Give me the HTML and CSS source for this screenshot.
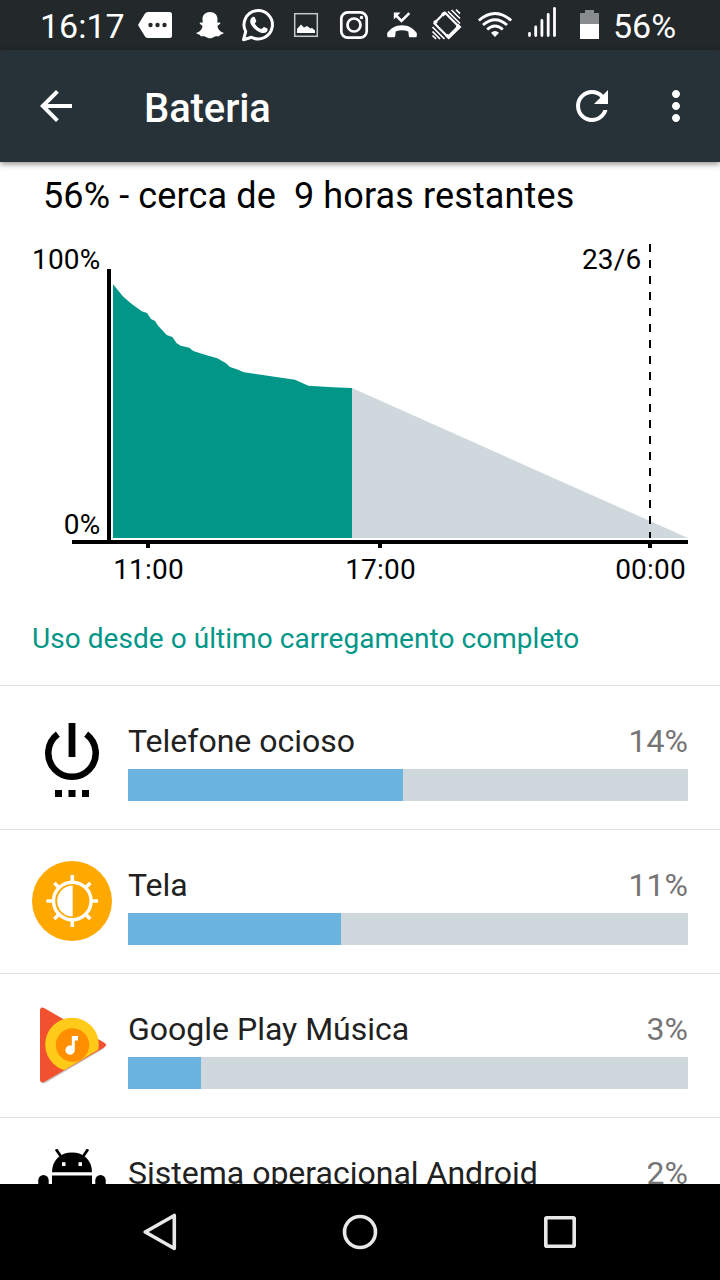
FILE: index.html
```html
<!DOCTYPE html>
<html lang="pt-BR">
<head>
    <meta charset="UTF-8">
    <title>Bateria</title>
    <link rel="stylesheet" href="styles.css">
</head>
<body>
    <div class="status-bar">
        <span class="clock">16:17</span>
        <!-- message -->
        <svg width="55" height="50" viewBox="0 0 55 50">
            <path fill="#fff" d="M7 25L14 13.500Q15 12 17 12H38.500Q41 12 41 14.500V35.500Q41 38 38.500 38H17Q15 38 14 36.500Z"/>
            <circle cx="19.500" cy="25" r="2.200" fill="#23282b"/>
            <circle cx="26.500" cy="25" r="2.200" fill="#23282b"/>
            <circle cx="33.500" cy="25" r="2.200" fill="#23282b"/>
        </svg>
        <!-- snapchat -->
        <svg width="48" height="50" viewBox="0 0 48 50">
            <path fill="#fff" d="M24 12C28.500 12 31.500 15 31.500 19L31.300 22.500C32.500 23 34 22 34.300 23C34.500 24.300 31.500 25 31.500 26.500C32 29.500 34.500 32 37.500 32.800C38 34 35 34.500 34 34.900C33.500 35.500 33.700 36 33 36.300C31.500 36.300 30 36 28.500 36.800C27 37.700 26 38.300 24 38.300C22 38.300 21 37.700 19.500 36.800C18 36 16.500 36.300 15 36.300C14.300 36 14.500 35.500 14 34.900C13 34.500 10 34 10.500 32.800C13.500 32 16 29.500 16.500 26.500C16.500 25 13.500 24.300 13.700 23C14 22 15.500 23 16.700 22.500L16.500 19C16.500 15 19.500 12 24 12Z"/>
        </svg>
        <!-- whatsapp -->
        <svg width="48" height="50" viewBox="0 0 48 50">
            <path fill="none" stroke="#fff" stroke-width="3" stroke-linejoin="round" d="M9.500 39.800L11.700 31.500A14.200 14.200 0 1 1 17.500 37.300Z"/>
            <path fill="#fff" d="M18.300 17.300C19.400 16.600 20.600 16.700 21.100 18L22.300 20.900C22.500 22 20.800 23 20.900 23.700C22.300 26.300 24.400 28 27.300 29.100C28.200 29.100 29.300 26.900 30.200 27L33.300 28.500C34 29 33.500 31.200 32.500 32C30.700 33.500 28.500 33.300 25.700 32.200C21.700 30.500 18.700 27.500 16.800 24C15.500 21.400 16.400 18.600 18.300 17.300Z"/>
        </svg>
        <!-- picture -->
        <svg width="48" height="50" viewBox="0 0 48 50">
            <rect x="12.700" y="13.700" width="22.600" height="22.600" fill="none" stroke="#c4c9cb" stroke-width="1.500"/>
            <path fill="#fff" d="M15 33V29L19 24.500L22 27.500L25 26L28.500 28.500L30 28L33 30.500V33Z"/>
        </svg>
        <!-- instagram -->
        <svg width="48" height="50" viewBox="0 0 48 50">
            <rect x="11.300" y="12.300" width="25.400" height="25.400" rx="6.500" fill="none" stroke="#fff" stroke-width="2.700"/>
            <circle cx="24" cy="25" r="6.500" fill="none" stroke="#fff" stroke-width="2.700"/>
            <circle cx="31.500" cy="17.500" r="1.700" fill="#fff"/>
        </svg>
        <!-- missed call -->
        <svg width="48" height="50" viewBox="0 0 48 50">
            <path fill="none" stroke="#fff" stroke-width="2.600" d="M31.300 13.200L23.500 21L17.500 15"/>
            <path fill="#fff" d="M15.800 12.500H22.500L15.800 19.500Z"/>
            <path fill="#fff" d="M9.200 33C13 28 18 25.300 24 25.300S35 28 38.800 33V36Q38.700 37.200 37.500 37.200H32Q30.900 37.200 30.800 36L30.300 31.500Q24 28.800 17.700 31.500L17.200 36Q17.100 37.200 16 37.200H10.500Q9.300 37.200 9.200 36Z"/>
        </svg>
        <!-- rotation -->
        <svg width="48" height="50" viewBox="0 0 48 50" fill="none" stroke="#fff">
            <path stroke-width="2.200" stroke-linejoin="round" d="M18.800 12.500L32.500 26.200L22 37L8.300 23.300Z"/>
            <path stroke-width="3.500" d="M31 25L33 27L22.700 37L20.500 35M18.500 13L16.300 15.200M10.500 21L8.500 23"/>
            <path stroke-width="1.700" d="M22 11.500L34 23.500M25.500 10L34 18.500M30 9.700L34 13.700M6.500 27L18.500 39M6.500 31.500L14 39M6.500 35.500L10 39"/>
        </svg>
        <!-- wifi -->
        <svg width="48" height="50" viewBox="0 0 48 50">
            <path fill="none" stroke="#fff" stroke-width="2.900" d="M4.800 20.500Q21 6.500 37.200 20.500M9 25Q21 14.500 33 25M13.200 29.500Q21 22.500 28.800 29.500"/>
            <path fill="#fff" d="M17 32.800Q21 29 25 32.800L21 37Z"/>
        </svg>
        <!-- signal -->
        <svg width="48" height="50" viewBox="0 0 48 50">
            <path stroke="#fff" stroke-width="2.800" stroke-linecap="round" d="M7.500 33.500V35.500M13.700 27V35.500M19.900 20.500V35.500M26.200 14.500V35.500M32.500 8.500V35.500"/>
        </svg>
        <!-- battery -->
        <svg width="43" height="50" viewBox="0 0 43 50">
            <path fill="#888c8e" d="M10 13H15V10H24V13H29V24H10Z"/>
            <path fill="#fff" d="M10 24H29V39H10Z"/>
        </svg>
        <span>56%</span>
    </div>

    <div class="toolbar">
        <svg width="48" height="48" viewBox="0 0 24 24"><path fill="#fff" d="M20 11H7.830l5.590-5.590L12 4l-8 8 8 8 1.410-1.410L7.830 13H20v-2z"/></svg>
        <h1>Bateria</h1>
        <svg width="48" height="48" viewBox="0 0 24 24"><path fill="#fff" d="M17.650 6.350C16.200 4.900 14.210 4 12 4c-4.420 0-7.990 3.580-7.990 8s3.570 8 7.990 8c3.730 0 6.840-2.550 7.730-6h-2.080c-.82 2.330-3.040 4-5.650 4-3.310 0-6-2.690-6-6s2.690-6 6-6c1.660 0 3.140.69 4.220 1.780L13 11h7V4l-2.350 2.350z"/></svg>
        <svg class="more" width="48" height="48" viewBox="0 0 24 24"><path fill="#fff" d="M12 8c1.100 0 2-.9 2-2s-.9-2-2-2-2 .9-2 2 .9 2 2 2zm0 2c-1.100 0-2 .9-2 2s.9 2 2 2 2-.9 2-2-.9-2-2-2zm0 6c-1.100 0-2 .9-2 2s.9 2 2 2 2-.9 2-2-.9-2-2-2z"/></svg>
    </div>

    <div class="content">
        <p class="summary">56% - cerca de  9 horas restantes</p>

        <svg class="chart" width="720" height="370" viewBox="0 230 720 370">
            <path fill="#cfd8dc" d="M352 388L688 538H352Z"/>
            <path fill="#009688" d="M113 538V284.300L123.300 296.700L131.700 304L141.700 311.300L147 313L151 319L155 321L158.300 326L166.700 335L172.300 337L176.700 343.300L180.700 345.700L189.300 347.700L193.300 351L203.300 354.300L217.300 358.300L226 363.300L230 367L236.700 369.300L244 372.300L295 379.700L308.300 385.700L333 387.300L352 388V538Z"/>
            <path fill="#000" d="M107 269H111V540H688V544H72V540H107ZM146 544H150V548H146ZM378 544H382V548H378ZM648 544H652V548H648Z"/>
            <path stroke="#000" stroke-width="2" stroke-dasharray="8 8" d="M650 244V538"/>
            <text x="100.500" y="269" text-anchor="end">100%</text>
            <text x="100.500" y="534" text-anchor="end">0%</text>
            <text x="641.500" y="269" text-anchor="end">23/6</text>
            <text x="148.500" y="579" text-anchor="middle">11:00</text>
            <text x="380.500" y="579" text-anchor="middle">17:00</text>
            <text x="650.500" y="579" text-anchor="middle">00:00</text>
        </svg>

        <h2>Uso desde o último carregamento completo</h2>

        <div class="row">
            <svg width="80" height="80" viewBox="0 0 80 80">
                <path fill="none" stroke="#000" stroke-width="6.500" d="M25.800 17.200A23.700 23.700 0 1 0 54.200 17.200"/>
                <path fill="#000" d="M36.600 6H43.400V40H36.600ZM23 73H30V80H23ZM36.500 73H43.500V80H36.500ZM50 73H57V80H50Z"/>
            </svg>
            <div class="info">
                <div class="label"><span>Telefone ocioso</span><span class="percent">14%</span></div>
                <div class="bar"><div class="fill" style="width:275px"></div></div>
            </div>
        </div>

        <div class="row">
            <svg width="80" height="80" viewBox="0 0 80 80">
                <circle cx="40" cy="40" r="40" fill="#ffa800"/>
                <circle cx="40.300" cy="40" r="18.800" fill="none" stroke="#fff" stroke-width="3.400"/>
                <path fill="#fff" d="M40.700 24.500V55.500A15.500 15.500 0 0 1 40.700 24.500Z"/>
                <path stroke="#fff" stroke-width="3.600" d="M40.300 14V20M40.300 60V66M14.500 40H21M59 40H66M22.300 22L27 26.700M58.300 22L53.600 26.700M22.300 58L27 53.300M58.300 58L53.600 53.300"/>
            </svg>
            <div class="info">
                <div class="label"><span>Tela</span><span class="percent">11%</span></div>
                <div class="bar"><div class="fill" style="width:213px"></div></div>
            </div>
        </div>

        <div class="row">
            <svg width="80" height="80" viewBox="0 0 80 80">
                <defs>
                    <clipPath id="fold"><path d="M0 0H80V36.500L12 77.200L0 80Z"/></clipPath>
                </defs>
                <path fill="#c8c8c8" d="M8.500 75Q9 79.500 13 78.200L72 43.500L70 40Z"/>
                <path fill="#f1512f" d="M8 6Q8 1 12.500 3.200L72 37.500Q76 40 72 42.500L12.500 76.800Q8 79 8 74Z"/>
                <g clip-path="url(#fold)">
                    <circle cx="40" cy="39.500" r="26.800" fill="#ffca18"/>
                </g>
                <circle cx="40.500" cy="40" r="16.700" fill="#ff8f00"/>
                <path fill="#fff" d="M39.800 31H46V35.500H42.800V45A4.700 4.700 0 1 1 39.800 40.700Z"/>
            </svg>
            <div class="info">
                <div class="label"><span>Google Play Música</span><span class="percent">3%</span></div>
                <div class="bar"><div class="fill" style="width:73px"></div></div>
            </div>
        </div>

        <div class="row">
            <svg width="80" height="80" viewBox="0 0 80 80">
                <path fill="#000" d="M20 23.300C20 11 28.500 3.500 40 3.500S60 11 60 23.300Z"/>
                <path stroke="#000" stroke-width="2.800" d="M24 .3L29 7.500M56 .3L51 7.500"/>
                <path fill="#fff" d="M30 13.300H33.500V17H30ZM46.500 13.300H50V17H46.500Z"/>
                <path fill="#000" d="M20 26.500H60V58Q60 62 56 62H24Q20 62 20 58Z"/>
                <rect x="6.300" y="26" width="10.400" height="30" rx="5.200" fill="#000"/>
                <rect x="63.300" y="26" width="10.400" height="30" rx="5.200" fill="#000"/>
                <path fill="#000" d="M28 60H37V78H28ZM43 60H52V78H43Z"/>
            </svg>
            <div class="info">
                <div class="label"><span>Sistema operacional Android</span><span class="percent">2%</span></div>
                <div class="bar"><div class="fill" style="width:45px"></div></div>
            </div>
        </div>
    </div>

    <div class="nav-bar">
        <svg width="48" height="48" viewBox="0 0 48 48"><path fill="none" stroke="#e8e8e8" stroke-width="3.600" stroke-linejoin="round" d="M9.200 24L38.300 7.500V40.500Z"/></svg>
        <svg width="48" height="48" viewBox="0 0 48 48"><circle cx="24" cy="24" r="15.500" fill="none" stroke="#e8e8e8" stroke-width="3.600"/></svg>
        <svg width="48" height="48" viewBox="0 0 48 48"><rect x="9.800" y="9.800" width="28.400" height="28.400" rx="1" fill="none" stroke="#e8e8e8" stroke-width="3.600"/></svg>
    </div>
</body>
</html>
```
FILE: styles.css
```css
body {
    font-family: Roboto, "Liberation Sans", sans-serif;
    display: flex;
    flex-direction: column;
    width: 720px;
    height: 1280px;
    margin: 0;
    overflow: hidden;
    background-color: #fff;
}
svg {
    display: block;
    flex-shrink: 0;
}
.status-bar {
    display: flex;
    height: 50px;
    flex-shrink: 0;
    line-height: 52px;
    font-size: 34px;
    color: #fff;
    background-color: #23282b;
}
.clock {
    width: 91px;
    padding-left: 40px;
}
.toolbar {
    display: flex;
    align-items: center;
    height: 112px;
    flex-shrink: 0;
    box-sizing: border-box;
    padding: 0 20px 0 32px;
    background-color: #263238;
    box-shadow: 0 2px 6px rgba(0, 0, 0, 0.45);
    z-index: 1;
}
.toolbar h1 {
    flex: 1;
    margin: 0;
    padding: 4px 0 0 64px;
    font-size: 40px;
    font-weight: 500;
    letter-spacing: -0.1px;
    color: #fff;
}
.more {
    margin-left: 36px;
}
.content {
    flex: 1;
    min-height: 0;
    overflow: hidden;
}
.summary {
    height: 68px;
    margin: 0;
    padding-left: 43px;
    line-height: 68px;
    font-size: 36px;
    letter-spacing: 0.12px;
    white-space: pre;
    color: #000;
}
.chart text {
    font-size: 28px;
    letter-spacing: 0.2px;
}
h2 {
    height: 85px;
    margin: 0;
    padding-left: 32px;
    line-height: 77px;
    font-size: 28px;
    font-weight: 400;
    letter-spacing: 0.05px;
    color: #009688;
}
.row {
    display: flex;
    align-items: center;
    height: 144px;
    box-sizing: border-box;
    padding: 0 32px 2px;
    border-top: 1px solid #e0e0e0;
}
.info {
    flex: 1;
    margin-left: 16px;
    padding-top: 8px;
}
.label {
    display: flex;
    justify-content: space-between;
    height: 40px;
    line-height: 40px;
    font-size: 32px;
    color: #212121;
}
.percent {
    color: #757575;
}
.bar {
    height: 32px;
    margin-top: 8px;
    background-color: #cfd8dc;
}
.fill {
    height: 32px;
    background-color: #6cb4e0;
}
.nav-bar {
    display: flex;
    justify-content: center;
    align-items: center;
    gap: 152px;
    height: 96px;
    flex-shrink: 0;
    background-color: #000;
}
```
